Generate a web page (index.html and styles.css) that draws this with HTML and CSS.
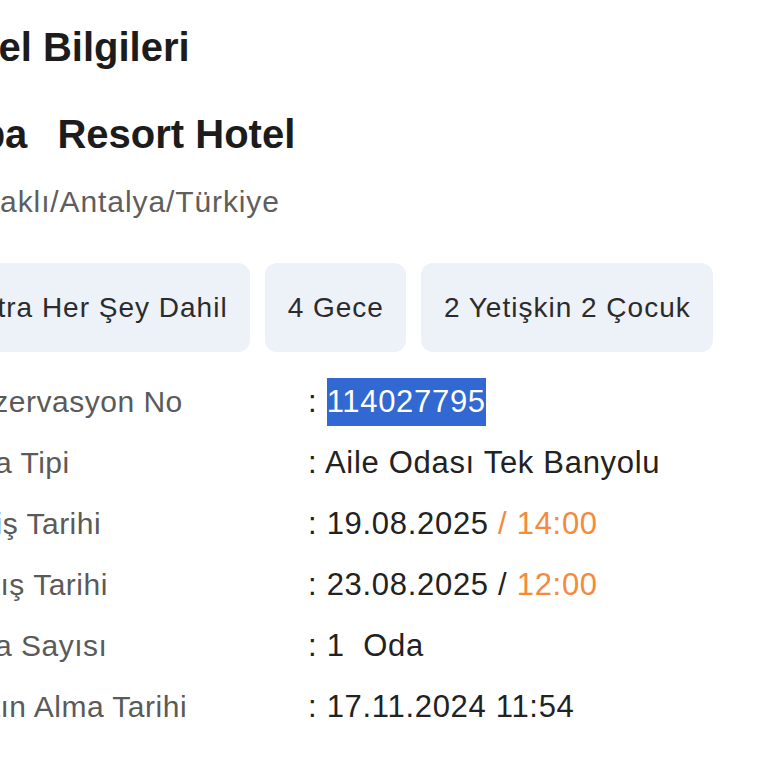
FILE: index.html
```html
<!DOCTYPE html>
<html>
  <head>
    <meta charset="utf-8">
    <title>Otel Bilgileri</title>
    <link rel="stylesheet" href="styles.css">
  </head>
  <body>
    <main class="hotel_info">
      <h2 class="section_title">Otel Bilgileri</h2>

      <h1 class="hotel_name"><span class="name_prefix">Spa</span> Resort Hotel</h1>
      <p class="hotel_location">Konaklı/Antalya/Türkiye</p>

      <div class="chips">
        <span class="chip">Ultra Her Şey Dahil</span>
        <span class="chip">4 Gece</span>
        <span class="chip">2 Yetişkin 2 Çocuk</span>
      </div>

      <dl class="details">
        <div class="detail_row">
          <dt>Rezervasyon No</dt>
          <dd>: <span class="picked">114027795</span></dd>
        </div>
        <div class="detail_row">
          <dt>Oda Tipi</dt>
          <dd>: Aile Odası Tek Banyolu</dd>
        </div>
        <div class="detail_row">
          <dt>Giriş Tarihi</dt>
          <dd>: 19.08.2025 <span class="time">/ 14:00</span></dd>
        </div>
        <div class="detail_row">
          <dt>Çıkış Tarihi</dt>
          <dd>: 23.08.2025 / <span class="time">12:00</span></dd>
        </div>
        <div class="detail_row">
          <dt>Oda Sayısı</dt>
          <dd>: 1&nbsp; Oda</dd>
        </div>
        <div class="detail_row">
          <dt>Satın Alma Tarihi</dt>
          <dd>: 17.11.2024 11:54</dd>
        </div>
      </dl>
    </main>
  </body>
</html>
```
FILE: styles.css
```css
body {
  margin: 0;
  background-color: #fff;
  font-family: "Liberation Sans", Arial, sans-serif;
  color: #222;
  overflow: hidden;
}

/* the card is wider than the window, its left side is cut off */
.hotel_info {
  margin-left: -46px;
  padding-top: 23px;
}

.section_title {
  margin: 0;
  font-size: 40px;
  line-height: 48px;
  font-weight: bold;
  color: #1c1c1c;
}

.hotel_name {
  margin: 39px 0 0;
  font-size: 40px;
  line-height: 48px;
  font-weight: bold;
  color: #1c1c1c;
}

.name_prefix {
  margin-right: 19px;
}

.hotel_location {
  margin: 27px 0 0 -10px;
  font-size: 30px;
  line-height: 34px;
  letter-spacing: 0.9px;
  color: #5e5e5e;
}

.chips {
  display: flex;
  gap: 15px;
  margin: 44px 0 0 -8px;
}

.chip {
  padding: 29px 22px 29px 23px;
  border-radius: 12px;
  background-color: #edf1f8;
  font-size: 28px;
  line-height: 31px;
  letter-spacing: 1px;
  color: #2b2b2b;
}

.details {
  margin: 19px 0 0;
}

.detail_row {
  display: flex;
  height: 61px;
  line-height: 61px;
}

.detail_row dt {
  width: 354px;
  font-size: 30px;
  letter-spacing: 0.5px;
  color: #5a5a5a;
}

.detail_row dd {
  margin: 0;
  font-size: 31px;
  letter-spacing: 0.7px;
  color: #222;
}

.picked {
  display: inline-block;
  height: 48px;
  line-height: 48px;
  background-color: #3268d2;
  color: #fff;
}

.time {
  color: #f5893c;
}
```
